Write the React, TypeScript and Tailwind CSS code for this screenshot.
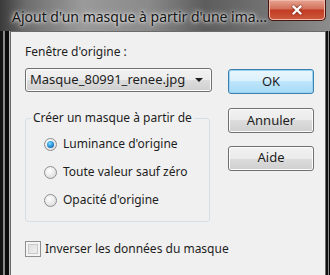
import { X } from 'lucide-react';

const font = { fontFamily: '"Noto Sans", "Open Sans", sans-serif' };

const Radio = ({ checked, label }: { checked?: boolean; label: string }) => (
  <label className="flex items-center gap-[6px] h-[16px] whitespace-nowrap">
    <span className="flex h-[13px] w-[13px] items-center justify-center rounded-full border border-[#8e8f8f] bg-[radial-gradient(circle_at_40%_35%,#ffffff,#d4d4d4)]">
      {checked && (
        <span className="h-[7px] w-[7px] rounded-full bg-[radial-gradient(circle_at_40%_35%,#7fdcff,#1f8ad6_55%,#0b3d66)]" />
      )}
    </span>
    <span className="text-[12px] text-[#1e1e1e]">{label}</span>
  </label>
);

const WinButton = ({ label, primary }: { label: string; primary?: boolean }) => (
  <button
    className={
      primary
        ? 'h-[25px] w-[86px] rounded-[3px] border border-[#3c7fb1] bg-[linear-gradient(#eaf6fd,#d9f0fc_50%,#bee6fd_50%,#a7d9f5)] text-[13px] text-[#1e1e1e] shadow-[inset_0_0_0_1px_#9ad2f2]'
        : 'h-[25px] w-[86px] rounded-[3px] border border-[#707070] bg-[linear-gradient(#f2f2f2,#ebebeb_50%,#dddddd_50%,#cfcfcf)] text-[13px] text-[#1e1e1e] shadow-[inset_0_0_0_1px_#fcfcfc]'
    }
  >
    {label}
  </button>
);

export default function App() {
  return (
    <div className="h-[275px] w-[330px] overflow-hidden bg-[#1b1b1b]" style={font}>
      {/* title bar */}
      <div className="flex h-[31px] items-start bg-[linear-gradient(90deg,#3a3a3a,#6e6e6e_8%,#9a9a9a_25%,#8a8a8a_45%,#5d5d5d_62%,#6f6f6f_78%,#8c8c8c)]">
        <div className="whitespace-nowrap pl-[12px] pt-[6px] text-[14px] text-[#151515] [text-shadow:0_0_6px_#e8e8e8,0_0_3px_#ffffff]">
          Ajout d'un masque à partir d'une ima...
        </div>
        <div className="ml-auto mr-[4px] flex h-[21px] w-[58px] shrink-0 items-center justify-center rounded-b-[5px] border border-t-0 border-[#4a1510] bg-[linear-gradient(#e8a493,#d2705a_45%,#c23b22_50%,#cd5a3e)] shadow-[inset_0_0_0_1px_#f0b8a8]">
          <X className="h-[14px] w-[14px] text-white drop-shadow-[0_0_1px_#5a1a10]" strokeWidth={4} />
        </div>
      </div>

      <div className="flex h-[244px]">
        {/* left frame */}
        <div className="w-[10px] bg-[linear-gradient(90deg,#141414_0,#141414_3px,#8a8a8a_3px,#8a8a8a_5px,#0c0c0c_5px,#0c0c0c_9px,#b8b8b8_9px)]" />

        {/* client */}
        <div className="flex w-[316px] border-l border-t border-r border-[#6b6b6b] bg-[#f0f0f0] pl-[14px] pt-[12px] text-[#1e1e1e]">
          <div className="flex w-[188px] flex-col">
            <div className="h-[16px] whitespace-nowrap text-[12px] leading-[16px]">Fenêtre d'origine :</div>
            <div className="mt-[8px] flex h-[24px] w-[187px] items-center rounded-[3px] border border-[#707070] bg-[linear-gradient(#f2f2f2,#ebebeb_50%,#dddddd_50%,#cfcfcf)] pl-[4px] pr-[8px] text-[13px] shadow-[inset_0_0_0_1px_#fbfbfb]">
              <span className="whitespace-nowrap">Masque_80991_renee.jpg</span>
              <span className="ml-auto h-0 w-0 border-l-[4px] border-r-[4px] border-t-[4px] border-l-transparent border-r-transparent border-t-[#1e1e1e]" />
            </div>

            <fieldset className="mt-[18px] h-[112px] w-[185px] rounded-[3px] border border-[#d5dfe5]">
              <legend className="ml-[5px] whitespace-nowrap px-[2px] text-[12px] leading-[16px]">Créer un masque à partir de</legend>
              <div className="flex flex-col gap-[12px] pl-[18px] pt-[10px]">
                <Radio checked label="Luminance d'origine" />
                <Radio label="Toute valeur sauf zéro" />
                <Radio label="Opacité d'origine" />
              </div>
            </fieldset>

            <label className="mt-[18px] flex items-center gap-[4px] whitespace-nowrap">
              <span className="h-[16px] w-[16px] shrink-0 border border-[#8e8f8f] bg-[linear-gradient(135deg,#dcdcdc,#f4f4f4)] shadow-[inset_0_0_0_2px_#f4f4f4,inset_0_0_0_3px_#c9c9c9]" />
              <span className="text-[12px]">Inverser les données du masque</span>
            </label>
          </div>

          <div className="ml-[15px] flex flex-col pt-[25px]">
            <WinButton primary label="OK" />
            <div className="mt-[13px]">
              <WinButton label="Annuler" />
            </div>
            <div className="mt-[11px]">
              <WinButton label="Aide" />
            </div>
          </div>
        </div>

        {/* right frame */}
        <div className="w-[4px] bg-[linear-gradient(90deg,#101010_0,#101010_2px,#8a8a8a_2px,#8a8a8a_3px,#0c0c0c_3px)]" />
      </div>
    </div>
  );
}
